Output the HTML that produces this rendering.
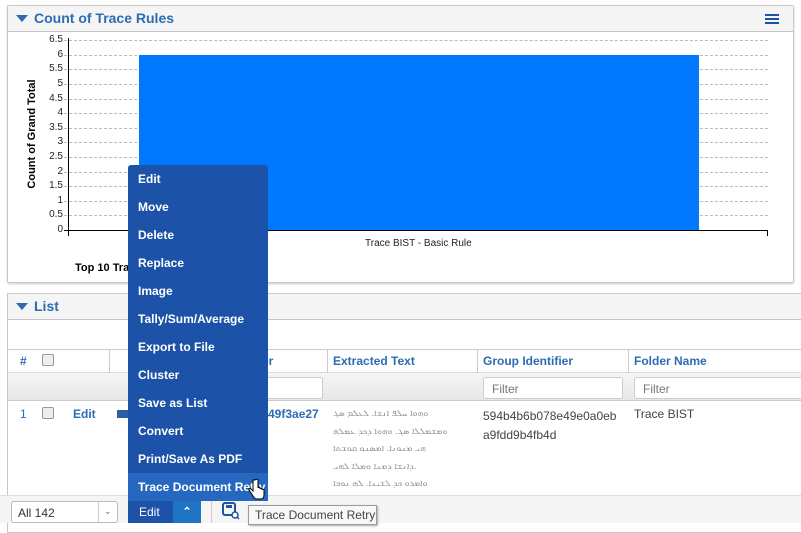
<!DOCTYPE html>
<html><head><meta charset="utf-8"><style>
*{box-sizing:border-box;margin:0;padding:0}
body{width:801px;height:523px;overflow:hidden;background:#fff;font-family:"Liberation Sans",sans-serif;position:relative}
.a{position:absolute}
.hdr{background:#f5f5f5;border-bottom:1px solid #c8c8c8}
.tt{color:#2d6bb3;font-size:14px;font-weight:bold}
.tri{width:0;height:0;border-left:6px solid transparent;border-right:6px solid transparent;border-top:7px solid #2d6bb3}
.gl{position:absolute;left:64px;width:704px;height:0;border-top:1px dashed #bbb}
.yl{position:absolute;width:30px;right:738px;text-align:right;font-size:10px;color:#222;line-height:10px}
.th{color:#2d6bb3;font-size:12px;font-weight:bold}
.cb{width:12px;height:12px;border:1px solid #999;border-radius:2px;background:#eee}
.flt{height:22px;border:1px solid #ccc;border-radius:3px;background:#fff;font-size:12px;color:#777;padding:4px 8px}
.mi{position:absolute;left:138px;color:#fff;font-size:12px;font-weight:bold}
.sy{font-size:9px;color:#888;line-height:17.5px;letter-spacing:0.5px}
</style></head><body>
<div class="a" style="left:7px;top:5px;width:787px;height:278px;border:1px solid #c8c8c8;border-radius:2px;box-shadow:0 1px 2px #ccc"></div>
<div class="a hdr" style="left:8px;top:6px;width:785px;height:26px"></div>
<div class="a tri" style="left:16px;top:15px"></div>
<div class="a tt" style="left:34px;top:10px">Count of Trace Rules</div>
<div class="a" style="left:765px;top:14px;width:14px;height:2px;background:#1c53a8;box-shadow:0 4px 0 #1c53a8,0 8px 0 #1c53a8"></div>
<div class="gl" style="top:40px"></div><div class="gl" style="top:55px"></div><div class="gl" style="top:69px"></div><div class="gl" style="top:84px"></div><div class="gl" style="top:99px"></div><div class="gl" style="top:113px"></div><div class="gl" style="top:128px"></div><div class="gl" style="top:142px"></div><div class="gl" style="top:157px"></div><div class="gl" style="top:172px"></div><div class="gl" style="top:186px"></div><div class="gl" style="top:201px"></div><div class="gl" style="top:215px"></div>
<div class="yl" style="top:35px">6.5</div><div class="yl" style="top:50px">6</div><div class="yl" style="top:64px">5.5</div><div class="yl" style="top:79px">5</div><div class="yl" style="top:94px">4.5</div><div class="yl" style="top:108px">4</div><div class="yl" style="top:123px">3.5</div><div class="yl" style="top:137px">3</div><div class="yl" style="top:152px">2.5</div><div class="yl" style="top:167px">2</div><div class="yl" style="top:181px">1.5</div><div class="yl" style="top:196px">1</div><div class="yl" style="top:210px">0.5</div><div class="yl" style="top:225px">0</div>
<div class="a" style="left:68px;top:38px;width:1px;height:198px;background:#000"></div>
<div class="a" style="left:139px;top:55px;width:560px;height:175px;background:#0078ff"></div>
<div class="a" style="left:64px;top:230px;width:704px;height:1px;background:#000"></div>
<div class="a" style="left:767px;top:230px;width:1px;height:6px;background:#000"></div>
<div class="a" style="left:365px;top:238px;font-size:10px;color:#222">Trace BIST - Basic Rule</div>
<div class="a" style="left:-23px;top:128px;width:110px;transform:rotate(-90deg);font-size:11px;font-weight:bold;text-align:center">Count of Grand Total</div>
<div class="a" style="left:75px;top:262px;font-size:11px;font-weight:bold">Top 10 Trace</div>
<div class="a" style="left:7px;top:293px;width:800px;height:240px;border:1px solid #c8c8c8"></div>
<div class="a hdr" style="left:8px;top:294px;width:800px;height:26px"></div>
<div class="a tri" style="left:16px;top:303px"></div>
<div class="a tt" style="left:34px;top:298px">List</div>
<div class="a" style="left:8px;top:349px;width:800px;height:24px;border-top:1px solid #ccc;border-bottom:1px solid #ddd"></div>
<div class="a" style="left:8px;top:373px;width:800px;height:28px;background:linear-gradient(#f5f5f5,#e8e8e8);border-bottom:1px solid #ccc"></div>
<div class="a" style="left:109px;top:350px;width:1px;height:23px;background:#ccc"></div>
<div class="a" style="left:327px;top:350px;width:1px;height:23px;background:#ccc"></div>
<div class="a" style="left:477px;top:350px;width:1px;height:23px;background:#ccc"></div>
<div class="a" style="left:628px;top:350px;width:1px;height:23px;background:#ccc"></div>
<div class="a th" style="left:20px;top:354px">#</div>
<div class="a cb" style="left:42px;top:354px"></div>
<div class="a th" style="left:262px;top:354px">er</div>
<div class="a th" style="left:333px;top:354px">Extracted Text</div>
<div class="a th" style="left:483px;top:354px">Group Identifier</div>
<div class="a th" style="left:634px;top:354px">Folder Name</div>
<div class="a flt" style="left:240px;top:377px;width:83px"></div>
<div class="a flt" style="left:483px;top:377px;width:140px">Filter</div>
<div class="a flt" style="left:634px;top:377px;width:180px">Filter</div>
<div class="a th" style="left:20px;top:407px;font-weight:normal">1</div>
<div class="a cb" style="left:42px;top:407px"></div>
<div class="a th" style="left:73px;top:407px">Edit</div>
<div class="a" style="left:117px;top:410px;width:12px;height:8px;background:#2d5fa0"></div>
<div class="a th" style="left:268px;top:407px">49f3ae27</div>
<div class="a sy" style="left:333px;top:405px">ܘܗܘܐ ܚܠܦ ܐܢܫܐ. ܠܥܠܡ ܣܓ<br>ܘܡܫܡܠܠܐ ܣܓ. ܘܗܘܐ ܕܟܕ ܥܡܠܗ<br>ܗܝ ܡܢܘܢܐ. ܐܡܣܢܘ ܩܘܫܬܐ<br>ܕܐܢܫܐ ܕܡܢܐ ܘܡܠܐ ܠܗܝ.<br>ܘܐܡܪܘ ܟܕ ܠܫܝܢܐ. ܠܗ ܢܘܟܐ</div>
<div class="a" style="left:483px;top:407px;font-size:12px;color:#444;line-height:19px">594b4b6b078e49e0a0eb<br>a9fdd9b4fb4d</div>
<div class="a" style="left:634px;top:407px;font-size:12px;color:#444">Trace BIST</div>
<div class="a" style="left:0;top:495px;width:801px;height:28px;background:#f5f5f5;border-top:1px solid #ddd"></div>
<div class="a" style="left:11px;top:501px;width:107px;height:22px;background:#fff;border:1px solid #bbb;border-radius:3px;font-size:12px;color:#333;padding:4px 6px">All 142</div>
<div class="a" style="left:98px;top:502px;width:1px;height:20px;background:#ccc"></div>
<div class="a" style="left:104px;top:506px;font-size:9px;color:#666">&#8964;</div>
<div class="a" style="left:211px;top:500px;width:1px;height:23px;background:#ccc"></div>
<svg class="a" style="left:222px;top:502px" width="18" height="18"><rect x="1" y="1" width="12" height="12" rx="2" fill="none" stroke="#1c53a8" stroke-width="2"/><rect x="4" y="3" width="6" height="3" fill="#1c53a8"/><circle cx="13" cy="13" r="3" fill="#fff" stroke="#1c53a8" stroke-width="1.5"/><line x1="15" y1="15" x2="17" y2="17" stroke="#1c53a8" stroke-width="1.5"/></svg>
<div class="a" style="left:248px;top:505px;width:129px;height:20px;background:#f8f8f8;border:1px solid #999;font-size:12px;color:#444;padding:2px 6px;box-shadow:1px 1px 2px #aaa;white-space:nowrap">Trace Document Retry</div>
<div class="a" style="left:128px;top:165px;width:140px;height:336px;background:#1c53a8;border-radius:3px"></div>
<div class="a" style="left:128px;top:473px;width:140px;height:28px;background:#2668c0"></div>
<div class="mi" style="top:172px">Edit</div>
<div class="mi" style="top:200px">Move</div>
<div class="mi" style="top:228px">Delete</div>
<div class="mi" style="top:256px">Replace</div>
<div class="mi" style="top:284px">Image</div>
<div class="mi" style="top:312px">Tally/Sum/Average</div>
<div class="mi" style="top:340px">Export to File</div>
<div class="mi" style="top:368px">Cluster</div>
<div class="mi" style="top:396px">Save as List</div>
<div class="mi" style="top:424px">Convert</div>
<div class="mi" style="top:452px">Print/Save As PDF</div>
<div class="mi" style="top:480px">Trace Document Retry</div>
<div class="a" style="left:128px;top:501px;width:45px;height:22px;background:#1c53a8;color:#fff;font-size:12px;padding:4px 11px">Edit</div>
<div class="a" style="left:173px;top:501px;width:28px;height:22px;background:#1f74c4;color:#fff;font-size:11px;text-align:center;line-height:22px;font-weight:bold">&#8963;</div>
<svg class="a" style="left:248px;top:478px" width="18" height="24"><path d="M5 2v11l-2-2c-1-1-3 0-2 1l4 6c1 2 2 3 4 3h4c2 0 3-2 3-4v-5c0-1-2-1-2 0v-1c0-1-2-1-2 0v-1c0-1-2-1-2 0V2c0-1-3-1-3 0z" fill="#fff" stroke="#000" stroke-width="1"/></svg>
</body></html>
